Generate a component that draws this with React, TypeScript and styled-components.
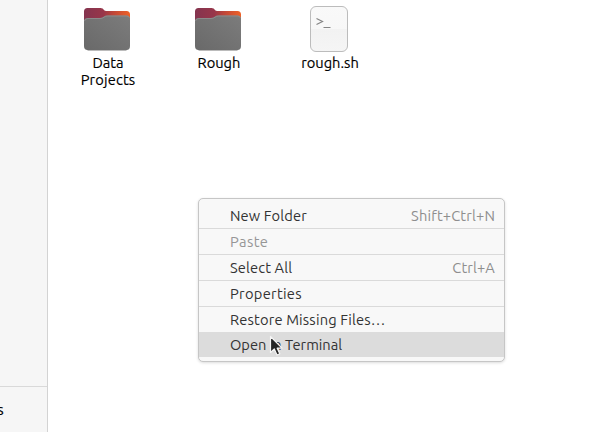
import React from "react";
import styled, { createGlobalStyle } from "styled-components";

const GlobalStyle = createGlobalStyle`
  * { box-sizing: border-box; }
  body { margin: 0; background: #fff; overflow: hidden; }
`;

const Window = styled.div`
  position: relative;
  display: flex;
  width: 597px;
  height: 432px;
  overflow: hidden;
  background: #fff;
  font: 14.667px/17px Ubuntu, "Noto Sans", sans-serif;
  color: #111;
`;

const Sidebar = styled.aside`
  display: flex;
  flex: 0 0 48px;
  flex-direction: column;
  background: #f6f6f6;
  border-right: 1px solid #d3d3d3;
`;

const Bookmarks = styled.div`
  height: 386px;
`;

const Locations = styled.div`
  flex: 1;
  padding-top: 14px;
  overflow: hidden;
  border-top: 1px solid #d9d9d9;
`;

const LocationLabel = styled.div`
  display: flex;
  justify-content: flex-end;
  width: 3.500px;
  color: #000;
  white-space: nowrap;
  -webkit-text-stroke: 0.2px currentColor;
`;

const Files = styled.main`
  display: flex;
  padding: 4px 0 0 4px;
`;

const File = styled.div`
  display: flex;
  flex: 0 0 111px;
  flex-direction: column;
  align-items: center;
  text-align: center;
`;

const FileIcon = styled.svg`
  display: block;
  flex: none;
  margin: 0 2px 0 0;
`;

const Label = styled.span<{ $spacing?: number }>`
  display: block;
  letter-spacing: ${(p) => p.$spacing ?? 0}px;
  white-space: nowrap;
`;

const FileName = styled(Label)`
  padding-left: 1px;
  color: #000;
  -webkit-text-stroke: 0.15px currentColor;
`;

const Menu = styled.div`
  position: absolute;
  left: 198px;
  top: 198px;
  width: 307px;
  height: 164px;
  padding: 4px 0;
  background: #f8f8f8;
  border: 1px solid #c6c6c6;
  border-radius: 5px;
  box-shadow: 0 1px 3px rgba(0, 0, 0, 0.14);
  color: #333;
`;

const MenuItem = styled.div<{ $active?: boolean; $disabled?: boolean }>`
  display: flex;
  justify-content: space-between;
  align-items: center;
  height: 25px;
  padding: 0 9px 0 31px;
  background: ${(p) => (p.$active ? "#dcdcdc" : "transparent")};
  color: ${(p) => (p.$disabled ? "#969696" : "inherit")};
`;

const Shortcut = styled(Label)`
  color: #8e8e8e;
`;

const Separator = styled.div`
  height: 1px;
  background: #dadada;
`;

const Pointer = styled.svg`
  position: absolute;
  left: 268px;
  top: 334px;
`;

function Folder({ id }: { id: string }) {
  return (
    <FileIcon width="48" height="50" viewBox="0 0 48 50">
      <defs>
        <linearGradient id={`${id}-back`}>
          <stop offset="0" stopColor="#84344f" />
          <stop offset=".42" stopColor="#98364a" />
          <stop offset=".62" stopColor="#bd4539" />
          <stop offset="1" stopColor="#ef6227" />
        </linearGradient>
        <linearGradient id={`${id}-front`} x1="0" y1="1" x2="1" y2="0">
          <stop offset="0" stopColor="#696969" />
          <stop offset="1" stopColor="#7c7c7c" />
        </linearGradient>
      </defs>
      <path d="M4.500 46.500H43.500" stroke="#bbb" strokeWidth="1" />
      <path d="M1 20V7.500Q1 4 4.500 4H17.500Q20 4 21 6Q21.500 7 23.500 7H43.500Q47 7 47 10.500V20Z" fill={`url(#${id}-back)`} />
      <path d="M1 17Q1 14 4.500 14H17Q19 14 20.500 12.800Q22 11.500 24 11.500H43.500Q47 11.500 47 15V42Q47 46 43.500 46H4.500Q1 46 1 42Z" fill={`url(#${id}-front)`} />
      <path d="M1.500 17Q2 14.500 5 14.500H17Q19.500 14.500 21 13.200Q22.500 12 24.500 12H43.500Q46 12 46.500 14" fill="none" stroke="#929292" strokeWidth=".8" />
    </FileIcon>
  );
}

function Script() {
  return (
    <FileIcon width="40" height="50" viewBox="0 0 40 50">
      <defs>
        <linearGradient id="paper" x2="0" y2="1">
          <stop stopColor="#f9f9f9" />
          <stop offset=".5" stopColor="#f7f7f7" />
          <stop offset=".5" stopColor="#f2f2f2" />
          <stop offset="1" stopColor="#f5f5f5" />
        </linearGradient>
      </defs>
      <rect x="1.500" y="2.500" width="37" height="45" rx="5.500" fill="url(#paper)" stroke="#bcbcbc" />
      <path d="M7.500 14.500L13.500 17.500L7.500 20.500M14.500 23.500H21.500" fill="none" stroke="#858585" strokeWidth="1.200" />
    </FileIcon>
  );
}

export default function App() {
  return (
    <Window>
      <GlobalStyle />
      <Sidebar>
        <Bookmarks />
        <Locations>
          <LocationLabel>s</LocationLabel>
        </Locations>
      </Sidebar>
      <Files>
        <File>
          <Folder id="data" />
          <FileName>Data</FileName>
          <FileName $spacing={0.15}>Projects</FileName>
        </File>
        <File>
          <Folder id="rough" />
          <FileName>Rough</FileName>
        </File>
        <File>
          <Script />
          <FileName>rough.sh</FileName>
        </File>
      </Files>
      <Menu>
        <MenuItem>
          <Label $spacing={0.12}>New Folder</Label>
          <Shortcut $spacing={0.15}>Shift+Ctrl+N</Shortcut>
        </MenuItem>
        <Separator />
        <MenuItem $disabled>
          <Label $spacing={0.4}>Paste</Label>
        </MenuItem>
        <Separator />
        <MenuItem>
          <Label $spacing={0.13}>Select All</Label>
          <Shortcut $spacing={0.12}>Ctrl+A</Shortcut>
        </MenuItem>
        <Separator />
        <MenuItem>
          <Label $spacing={0.3}>Properties</Label>
        </MenuItem>
        <Separator />
        <MenuItem>
          <Label $spacing={0.17}>Restore Missing Files…</Label>
        </MenuItem>
        <MenuItem $active>
          <Label>Open in Terminal</Label>
        </MenuItem>
      </Menu>
      <Pointer width="16" height="24" viewBox="0 0 16 24">
        <path d="M2.500 2.500V18.500L6.300 15L9 21L11.800 19.700L9.200 14.200H14Z" fill="#252525" stroke="#f5f5f5" strokeWidth="1.200" strokeLinejoin="round" />
      </Pointer>
    </Window>
  );
}
